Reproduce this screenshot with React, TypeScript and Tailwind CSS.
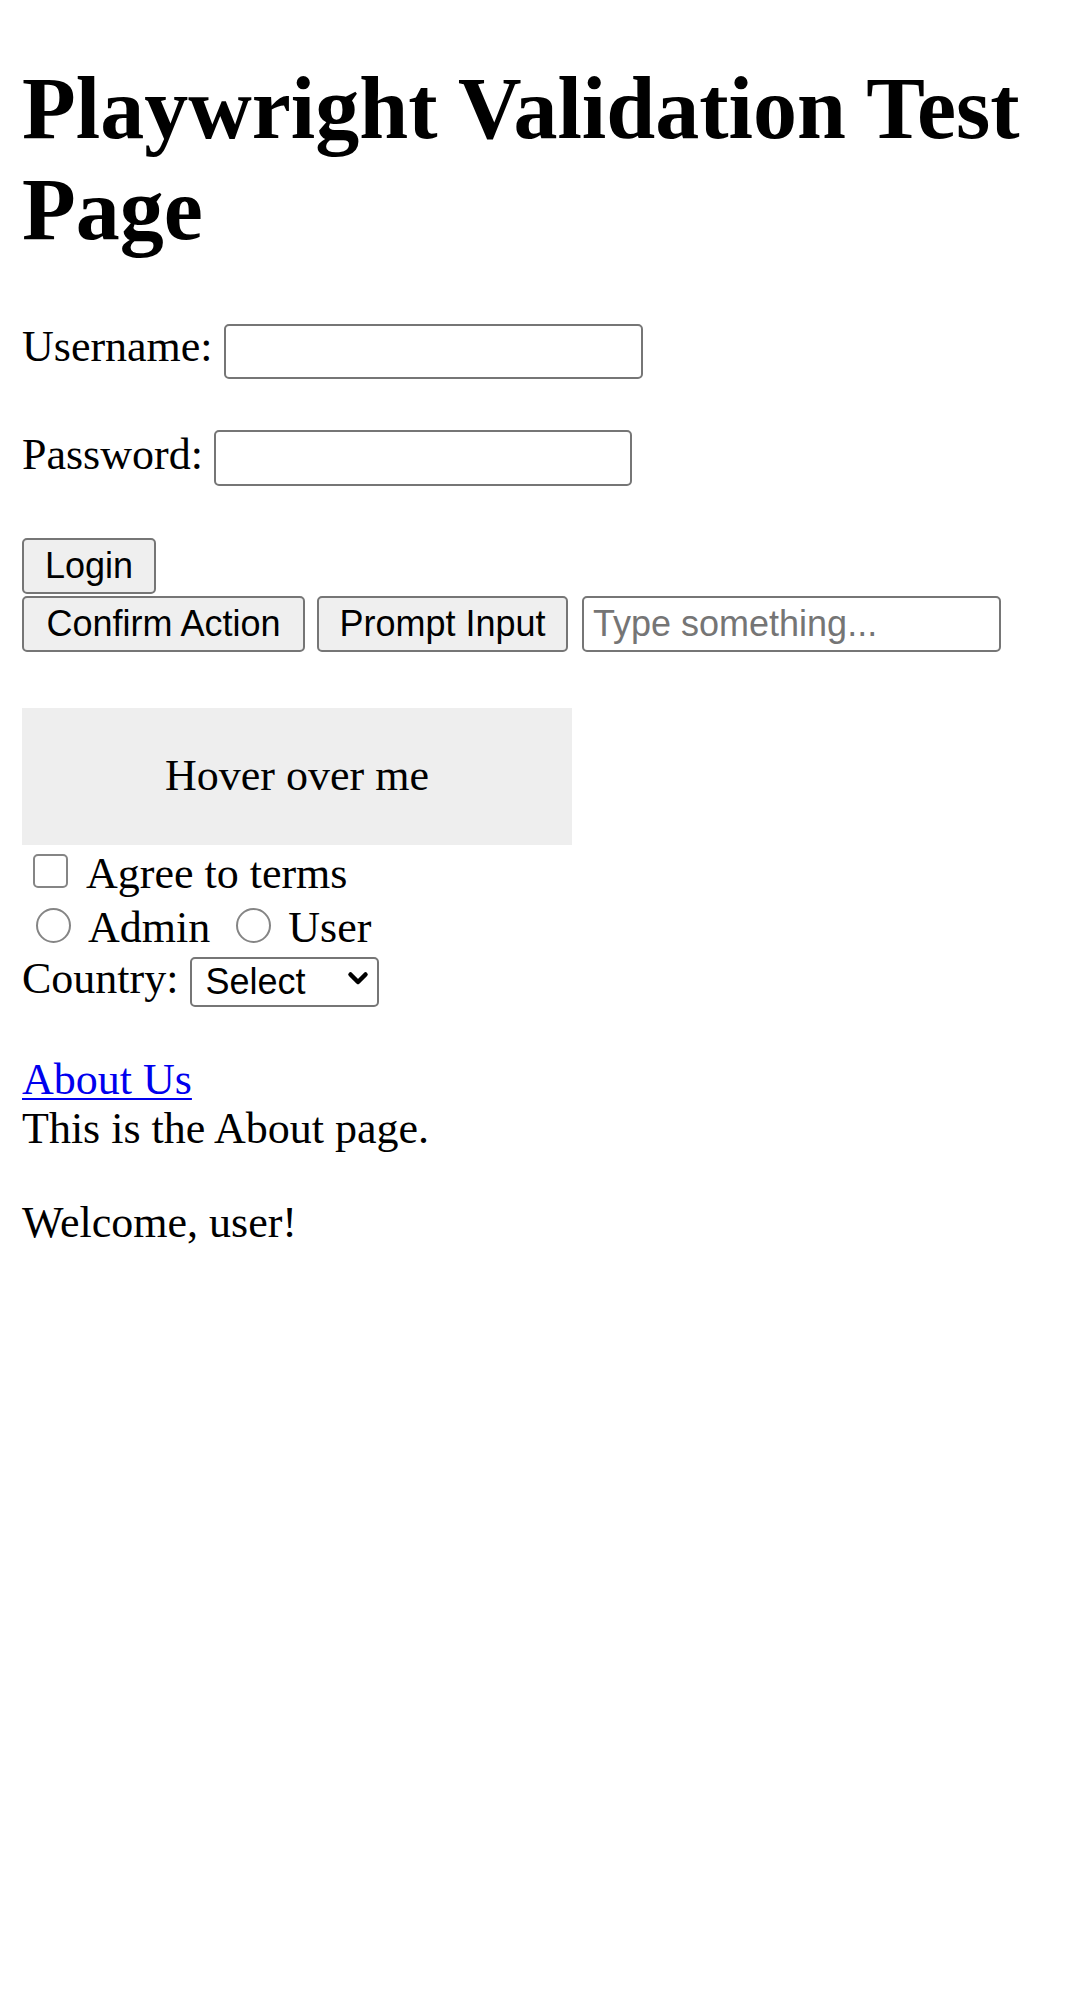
import React from "react";

export default function App() {
  const btn =
    "h-[56px] shrink-0 rounded-[5px] border-2 border-[#767676] bg-[#efefef] font-['Liberation_Sans',Arial,sans-serif] text-[36px] leading-none text-black flex items-center justify-center whitespace-nowrap";
  const field =
    "h-[55px] shrink-0 rounded-[5px] border-2 border-[#767676] bg-white font-['Liberation_Sans',Arial,sans-serif] text-[36px] text-black outline-none";
  return (
    <div className="min-h-[1999px] bg-white px-[22px] font-['Liberation_Serif','Times_New_Roman',serif] text-[44px] leading-[50.6px] text-black">
      <h1 className="pt-[58px] text-[88px] font-bold leading-[101px]">
        Playwright Validation Test Page
      </h1>

      <div className="mt-[62px] flex items-end">
        <label className="mr-[11px] pb-[6px]">Username:</label>
        <input type="text" className={`${field} w-[419px]`} />
      </div>

      <div className="mt-[51px] flex items-end">
        <label className="mr-[11px] pb-[6px]">Password:</label>
        <input type="password" className={`${field} h-[56px] w-[418px]`} />
      </div>

      <div className="mt-[52px] flex">
        <button className={`${btn} w-[134px]`}>Login</button>
      </div>

      <div className="mt-[2px] flex items-center">
        <button className={`${btn} w-[283px]`}>Confirm Action</button>
        <button className={`${btn} ml-[12px] w-[251px]`}>Prompt Input</button>
        <input
          type="text"
          placeholder="Type something..."
          className={`${field} ml-[14px] h-[56px] w-[419px] pl-[9px] placeholder:text-[#757575]`}
        />
      </div>

      <div className="mt-[56px] flex h-[137px] w-[550px] items-center justify-center bg-[#eeeeee]">
        Hover over me
      </div>

      <div className="flex h-[54px] items-end">
        <span className="mb-[11px] ml-[11px] mr-[18px] h-[34px] w-[35px] shrink-0 rounded-[5px] border-2 border-[#858585] bg-white" />
        <span>Agree to terms</span>
      </div>

      <div className="flex h-[54px] items-end">
        <span className="mb-[10px] ml-[14px] mr-[17px] h-[35px] w-[35px] shrink-0 rounded-full border-2 border-[#858585] bg-white" />
        <span>Admin</span>
        <span className="mb-[10px] ml-[26px] mr-[17px] h-[35px] w-[35px] shrink-0 rounded-full border-2 border-[#858585] bg-white" />
        <span>User</span>
      </div>

      <div className="mt-[1px] flex items-end">
        <label className="mr-[12px] pb-[2px]">Country:</label>
        <div className="relative mb-[2px] h-[50px] w-[189px] shrink-0">
          <select className="h-full w-full appearance-none rounded-[5px] border-2 border-[#767676] bg-white pl-[13px] font-['Liberation_Sans',Arial,sans-serif] text-[36px] leading-none text-black outline-none">
            <option>Select</option>
          </select>
          <svg
            className="pointer-events-none absolute right-[10px] top-[15px]"
            width="22"
            height="18"
            viewBox="0 0 22 18"
          >
            <path
              d="M3.5 4.5 L11 12 L18.5 4.5"
              fill="none"
              stroke="#000"
              strokeWidth="4.5"
              strokeLinecap="round"
              strokeLinejoin="round"
            />
          </svg>
        </div>
      </div>

      <div className="mt-[49px] leading-[48px]">
        <a href="#" className="text-[#0000ee] underline decoration-[2px] underline-offset-[4px]">
          About Us
        </a>
      </div>
      <div>This is the About page.</div>
      <p className="mt-[44px]">Welcome, user!</p>
    </div>
  );
}
